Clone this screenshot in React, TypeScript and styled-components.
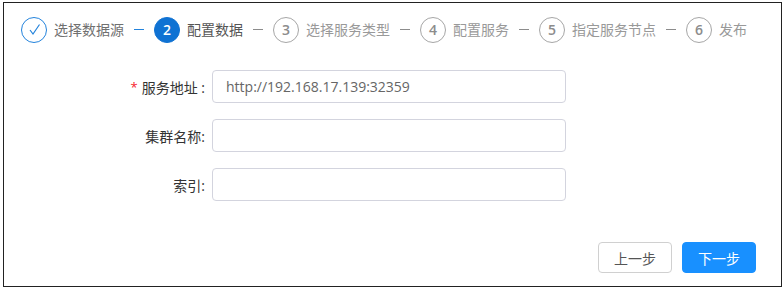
import styled, { createGlobalStyle } from 'styled-components';

const GlobalStyle = createGlobalStyle`
  body {
    margin: 0;
    background: #fff;
    font-family: "Open Sans", "Noto Sans CJK SC", sans-serif;
  }
`;

const Frame = styled.div`
  box-sizing: border-box;
  width: 779px;
  height: 285px;
  margin: 2px 0 0 3px;
  border: 1px solid #222;
  display: flex;
  flex-direction: column;
`;

const Steps = styled.div`
  display: flex;
  align-items: center;
  padding: 14px 0 0 17px;
  height: 25px;
`;

const Step = styled.div`
  display: flex;
  align-items: center;
  gap: 7px;
`;

const Circle = styled.div<{ $state: 'done' | 'active' | 'wait' }>`
  box-sizing: border-box;
  width: 26px;
  height: 26px;
  border-radius: 50%;
  display: flex;
  align-items: center;
  justify-content: center;
  font-size: 14px;
  font-weight: 600;
  border: 1px solid
    ${(p) => (p.$state === 'wait' ? '#a6a6a6' : p.$state === 'done' ? '#2383dc' : '#0f72d3')};
  background: ${(p) => (p.$state === 'active' ? '#0f72d3' : '#fff')};
  color: ${(p) => (p.$state === 'active' ? '#fff' : '#8c8c8c')};
`;

const Title = styled.span<{ $state: 'done' | 'active' | 'wait' }>`
  font-size: 14px;
  line-height: 20px;
  color: ${(p) => (p.$state === 'wait' ? '#999' : p.$state === 'active' ? '#555' : '#707070')};
  white-space: nowrap;
`;

const Dash = styled.div<{ $done?: boolean }>`
  width: 10px;
  height: 1px;
  margin: 0 10px 0 3px;
  background: ${(p) => (p.$done ? '#2383dc' : '#8c8c8c')};
`;

const Form = styled.div`
  display: grid;
  grid-template-columns: 201px 354px;
  column-gap: 7px;
  row-gap: 16px;
  margin-top: 28px;
`;

const Label = styled.label`
  display: flex;
  align-items: center;
  justify-content: flex-end;
  font-size: 14px;
  color: #333;
`;

const Required = styled.span`
  color: #f5222d;
  margin-right: 4px;
  font-size: 13px;
`;

const Input = styled.input`
  box-sizing: border-box;
  height: 33px;
  border: 1px solid #d3d4de;
  border-radius: 4px;
  padding: 0 13px;
  font-family: "Open Sans", "Noto Sans CJK SC", sans-serif;
  font-size: 14px;
  color: #666;
  outline: none;
`;

const Footer = styled.div`
  display: flex;
  justify-content: flex-end;
  gap: 10px;
  padding-right: 25px;
  margin-top: 41px;
`;

const Button = styled.button<{ $primary?: boolean }>`
  box-sizing: border-box;
  width: 74px;
  height: 31px;
  border-radius: 4px;
  font-family: "Open Sans", "Noto Sans CJK SC", sans-serif;
  font-size: 14px;
  border: 1px solid ${(p) => (p.$primary ? '#1890ff' : '#d0d0d0')};
  background: ${(p) => (p.$primary ? '#1890ff' : '#fff')};
  color: ${(p) => (p.$primary ? '#fff' : '#555')};
`;

type StepState = 'done' | 'active' | 'wait';

const steps: { title: string; state: StepState }[] = [
  { title: '选择数据源', state: 'done' },
  { title: '配置数据', state: 'active' },
  { title: '选择服务类型', state: 'wait' },
  { title: '配置服务', state: 'wait' },
  { title: '指定服务节点', state: 'wait' },
  { title: '发布', state: 'wait' },
];

function Check() {
  return (
    <svg width="13" height="13" viewBox="0 0 13 13" fill="none">
      <path d="M2 7 L5 11 L11.5 1.5" stroke="#2383dc" strokeWidth="1.2" />
    </svg>
  );
}

export default function App() {
  return (
    <>
      <GlobalStyle />
      <Frame>
        <Steps>
          {steps.map((s, i) => (
            <Step key={s.title}>
              <Circle $state={s.state}>{s.state === 'done' ? <Check /> : i + 1}</Circle>
              <Title $state={s.state}>{s.title}</Title>
              {i < steps.length - 1 && <Dash $done={s.state === 'done'} />}
            </Step>
          ))}
        </Steps>
        <Form>
          <Label>
            <Required>*</Required>服务地址 :
          </Label>
          <Input defaultValue="http://192.168.17.139:32359" />
          <Label>集群名称:</Label>
          <Input />
          <Label>索引:</Label>
          <Input />
        </Form>
        <Footer>
          <Button>上一步</Button>
          <Button $primary>下一步</Button>
        </Footer>
      </Frame>
    </>
  );
}
